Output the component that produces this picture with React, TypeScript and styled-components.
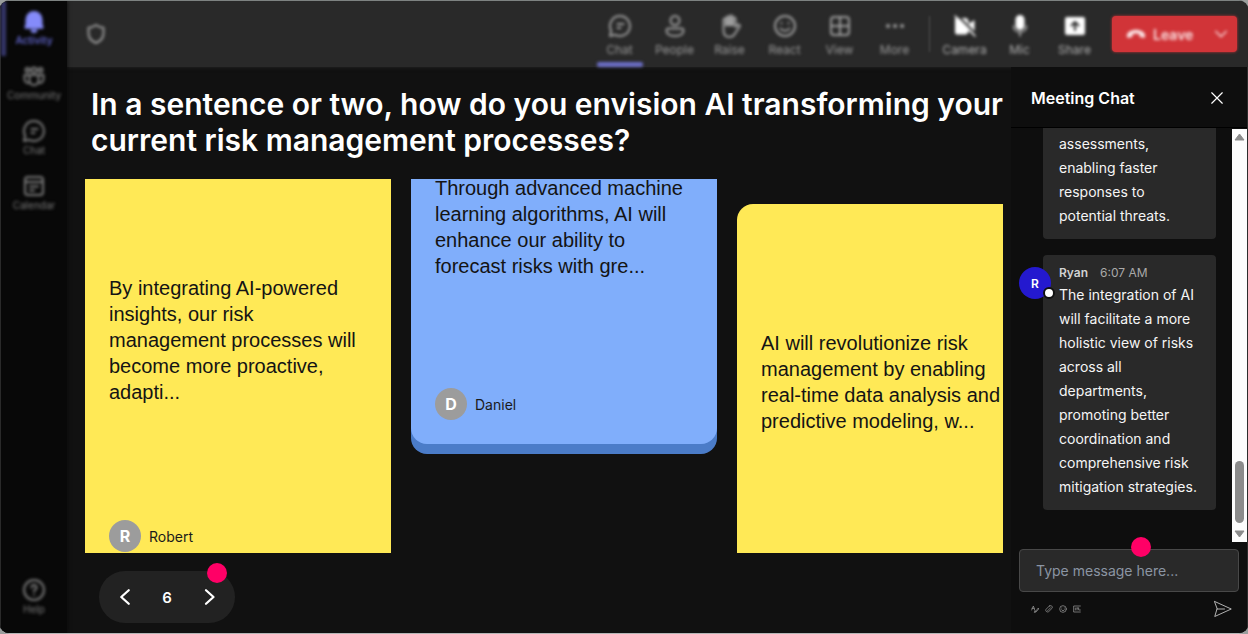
import React from 'react';
import styled, { createGlobalStyle, css } from 'styled-components';

const GlobalStyle = createGlobalStyle`
  *, *::before, *::after { box-sizing: border-box; }
  body { margin: 0; background: #9a9e9d; font-family: Inter, "Liberation Sans", sans-serif; }
  button { font: inherit; color: inherit; background: none; border: 0; padding: 0; cursor: pointer; }
  p, h1, h2 { margin: 0; }
  svg { display: block; }
`;

const softFocus = css`
  filter: blur(1px) blur(1px);
`;

const Shell = styled.div`
  display: flex;
  height: 100vh;
  min-height: 480px;
  border-top: 1px solid #7d8281;
  border-bottom: 1px solid #b4b6b6;
  background: #111;
  border-radius: 9px;
  overflow: hidden;
`;

const Sidebar = styled.nav`
  display: flex;
  flex-direction: column;
  flex: 0 0 67px;
  padding-bottom: 8px;
  background: #080808;
  border-left: 1px solid #2a2a2a;
  box-shadow: 0 0 4px #080808;
  z-index: 1;
`;

const SideSpacer = styled.div`
  flex: 1;
`;

const SideItem = styled.button<{ $active?: boolean }>`
  display: flex;
  flex-direction: column;
  align-items: center;
  height: 55px;
  padding-top: 8px;
  font-size: 10px;
  line-height: 14px;
  color: ${(p) => (p.$active ? '#5f63c8' : '#7c7c7c')};
  ${softFocus}
  ${(p) =>
    p.$active &&
    css`
      box-shadow: inset 5px 0 0 #36376b;
      font-weight: 600;
      svg { color: #858bfa; }
    `}
`;

const Main = styled.div`
  display: flex;
  flex-direction: column;
  flex: 1;
  min-width: 0;
`;

const TopBar = styled.header`
  display: flex;
  align-items: center;
  justify-content: flex-end;
  flex: 0 0 66px;
  padding: 0 11px 0 17px;
  background: #292929;
  box-shadow: 0 0 4px #292929;
`;

const ShieldButton = styled.button`
  margin-right: auto;
  color: #9c9c9c;
  ${softFocus}
`;

const Tool = styled.button<{ $bright?: boolean; $active?: boolean }>`
  display: flex;
  flex-direction: column;
  align-items: center;
  width: 55px;
  height: 66px;
  padding-top: 13px;
  font-size: 12px;
  line-height: 24px;
  color: ${(p) => (p.$bright ? '#b0b0b0' : '#9a9a9a')};
  ${softFocus}
  svg { color: ${(p) => (p.$bright ? '#fff' : '#9e9e9e')}; }
  ${(p) =>
    p.$active &&
    css`
      &::after {
        content: '';
        width: 46px;
        height: 5px;
        border-radius: 2px;
        background: #6c6ec8;
      }
    `}
`;

const ToolDivider = styled.div`
  width: 1px;
  height: 36px;
  margin: 0 7px;
  background: #505050;
  filter: blur(1px);
`;

const LeaveGroup = styled.div`
  display: flex;
  align-items: center;
  height: 36px;
  margin-left: 10px;
  border-radius: 4px;
  background: #d13438;
  color: #fbe4e5;
  box-shadow: 0 0 3px #d13438;
`;

const LeaveButton = styled.button`
  display: flex;
  align-items: center;
  gap: 7px;
  width: 93px;
  padding-left: 14px;
  font-size: 14px;
  font-weight: 600;
  ${softFocus}
`;

const LeaveMore = styled.button`
  display: flex;
  justify-content: center;
  width: 32px;
  ${softFocus}
`;

const Content = styled.div`
  display: flex;
  flex: 1;
  min-height: 0;
`;

const Stage = styled.main`
  display: flex;
  flex-direction: column;
  flex: 1;
  min-width: 0;
  padding: 19px 8px 10px 18px;
`;

const Question = styled.h1`
  padding-left: 6px;
  margin-bottom: 21px;
  color: #fff;
  font-size: 30px;
  font-weight: 600;
  line-height: 36px;
`;

const Board = styled.section`
  display: flex;
  align-items: flex-start;
  gap: 20px;
  flex: 1;
  min-height: 0;
  overflow: hidden;
`;

const tones = {
  yellow: { face: '#ffe956', edge: '#cdb83a' },
  blue: { face: '#80aefb', edge: '#4b7cc8' },
};

const Card = styled.article<{ $tone: keyof typeof tones; $shift: number; $height: number }>`
  display: flex;
  flex-direction: column;
  flex: 0 0 306px;
  gap: 26px;
  height: ${(p) => p.$height}px;
  margin-top: ${(p) => p.$shift}px;
  padding: 24px;
  border-radius: 16px;
  background: ${(p) => tones[p.$tone].face};
  box-shadow: 0 10px 0 ${(p) => tones[p.$tone].edge};
`;

const CardText = styled.p`
  display: flex;
  flex: 1;
  flex-direction: column;
  justify-content: center;
  color: #141414;
  font-family: "Liberation Sans", Arial, sans-serif;
  font-size: 20px;
  line-height: 26px;
  white-space: nowrap;
`;

const Author = styled.div`
  display: flex;
  align-items: center;
  gap: 8px;
  height: 32px;
  color: #1a1a1a;
  font-size: 14px;
`;

const AuthorBadge = styled.span`
  display: grid;
  place-items: center;
  width: 32px;
  height: 32px;
  border-radius: 50%;
  background: #9c9c9c;
  color: #fff;
  font-size: 16px;
  font-weight: 700;
`;

const Pager = styled.div`
  position: relative;
  display: flex;
  align-items: center;
  justify-content: space-between;
  width: 136px;
  height: 52px;
  margin: 18px 0 0 14px;
  padding: 0 17px;
  border-radius: 26px;
  background: #222;
  color: #fff;
  font-size: 15px;
  font-weight: 600;
`;

const Hotspot = styled.span<{ $place: 'pager' | 'composer' }>`
  position: absolute;
  width: 20px;
  height: 20px;
  border-radius: 50%;
  background: #ff0066;
  ${(p) => (p.$place === 'pager' ? 'top: -8px; right: 8px;' : 'top: -12px; left: 51%;')}
`;

const Chat = styled.aside`
  display: flex;
  flex-direction: column;
  flex: 0 0 237px;
  background: #0e0e0e;
  border-right: 1px solid #2c2c2c;
`;

const ChatHeader = styled.header`
  display: flex;
  align-items: center;
  justify-content: space-between;
  height: 61px;
  padding: 2px 23px 0 20px;
  border-bottom: 1px solid #000;
  color: #fff;
`;

const ChatTitle = styled.h2`
  font-size: 16px;
  font-weight: 600;
`;

const ChatBody = styled.div`
  display: flex;
  flex: 1;
  min-height: 0;
`;

const Messages = styled.div`
  display: flex;
  flex: 1;
  flex-direction: column;
  justify-content: flex-end;
  gap: 16px;
  padding: 0 16px 32px 8px;
  overflow: hidden;
`;

const MessageRow = styled.div`
  display: grid;
  grid-template-columns: 24px 1fr;
`;

const Bubble = styled.div`
  grid-column: 2;
  grid-row: 1;
  padding: 8px 16px 11px;
  border-radius: 4px;
  background: #292929;
  color: #f5f5f5;
  font-size: 14px;
  line-height: 24px;
`;

const Line = styled.span`
  display: block;
  white-space: nowrap;
`;

const Meta = styled.div`
  display: flex;
  gap: 12px;
  color: #a9a9a9;
  font-size: 12px;
  line-height: 20px;
`;

const Sender = styled.strong`
  color: #d2d2d2;
  font-weight: 600;
`;

const Avatar = styled.span`
  position: relative;
  grid-column: 1;
  grid-row: 1;
  display: grid;
  place-items: center;
  width: 32px;
  height: 32px;
  margin-top: 12px;
  border-radius: 50%;
  background: #2419cf;
  color: #fff;
  font-size: 12px;
  font-weight: 600;
  z-index: 1;
  &::after {
    content: '';
    position: absolute;
    right: -4px;
    bottom: 0;
    width: 12px;
    height: 12px;
    border: 2px solid #111;
    border-radius: 50%;
    background: #fff;
  }
`;

const ScrollTrack = styled.div`
  display: flex;
  flex-direction: column;
  align-items: center;
  width: 15px;
  margin-top: 1px;
  padding: 4px 0;
  background: #fcfcfc;
  color: #8b8b8b;
`;

const ScrollThumb = styled.div`
  width: 9px;
  height: 62px;
  margin: auto 0 7px;
  border-radius: 5px;
  background: currentColor;
`;

const Composer = styled.form`
  position: relative;
  margin: 7px 8px 0 8px;
`;

const MessageInput = styled.input`
  display: block;
  width: 100%;
  height: 43px;
  padding: 0 16px;
  border: 1px solid #484848;
  border-radius: 4px;
  background: #292929;
  color: #fff;
  font: 14px Inter, sans-serif;
  &::placeholder { color: #8b95a3; opacity: 1; }
`;

const ComposerActions = styled.div`
  display: flex;
  align-items: center;
  gap: 6px;
  height: 41px;
  padding: 0 7px 8px 12px;
  color: #a5a5a5;
`;

const SendButton = styled.button`
  margin-left: auto;
  color: #e8e8e8;
`;

type IconProps = { size?: number; width?: number; children: React.ReactNode };

const Icon = ({ size = 24, width = 2, children }: IconProps) => (
  <svg
    width={size}
    height={size}
    viewBox="0 0 24 24"
    fill="none"
    stroke="currentColor"
    strokeWidth={width}
    strokeLinecap="round"
    strokeLinejoin="round"
    aria-hidden="true"
  >
    {children}
  </svg>
);

const BellIcon = () => (
  <Icon>
    <path fill="currentColor" stroke="none" d="M12 2a8.500 8.500 0 0 0-8.500 8.500V15l-1 3c-.3.900.2 1.700 1.100 1.700h16.800c.9 0 1.400-.8 1.100-1.700L20.500 15v-4.500A8.500 8.500 0 0 0 12 2ZM8.500 20.500a3.500 3.500 0 0 0 7 0Z" />
  </Icon>
);
const CommunityIcon = () => (
  <Icon>
    <circle cx="12" cy="6" r="2.500" />
    <circle cx="5.500" cy="6" r="2" />
    <circle cx="18.500" cy="6" r="2" />
    <path d="M7.500 11h9v5.500a4.500 4.500 0 0 1-9 0ZM7 11H2.500v4A4 4 0 0 0 7 19M17 11h4.500v4a4 4 0 0 1-4.500 4" />
  </Icon>
);
const ChatIcon = () => (
  <Icon>
    <path d="M12 2a10 10 0 1 1-4.800 18.800L2 22l1.200-5.200A10 10 0 0 1 12 2Z" />
    <path d="M9.500 10h6M9.500 14h3" />
  </Icon>
);
const CalendarIcon = () => (
  <Icon>
    <rect x="3" y="3" width="18" height="18" rx="3" />
    <path d="M3 8h18M8 12.500h8M8 16.500h4" />
  </Icon>
);
const HelpIcon = () => (
  <Icon>
    <circle cx="12" cy="12" r="10" />
    <path d="M9.500 9.500a2.500 2.500 0 1 1 3.700 2.200c-.8.500-1.200 1-1.200 2M12 17v.1" />
  </Icon>
);
const ShieldIcon = () => (
  <Icon>
    <path d="M12 3c2.300 1.700 4.700 2.500 7.500 2.700V11c0 4.700-2.500 8-7.500 10-5-2-7.500-5.300-7.500-10V5.700C7.300 5.500 9.700 4.700 12 3Z" />
  </Icon>
);
const PeopleIcon = () => (
  <Icon>
    <circle cx="12" cy="6.500" r="4.500" />
    <path d="M5.500 14.500h13c1.300 0 2 .8 2 2 0 3.500-3.500 5.500-8.500 5.500s-8.500-2-8.500-5.500c0-1.200.7-2 2-2Z" />
  </Icon>
);
const RaiseIcon = () => (
  <Icon>
    <path d="M5.500 12V6a1.500 1.500 0 0 1 3 0V4a1.500 1.500 0 0 1 3 0V3a1.500 1.500 0 0 1 3 0v2a1.500 1.500 0 0 1 3 0v8l2-2c1.500-1 3 .5 2 2l-4.500 6.500C16 21.500 14.500 23 11.500 23c-4 0-6-3-6-7Z" />
    <path d="M8.500 5v6M11.500 4v7M14.500 4v7" strokeWidth="3" />
  </Icon>
);
const ReactIcon = () => (
  <Icon>
    <circle cx="12" cy="12" r="10" />
    <path d="M8.500 9v.5M15.500 9v.5M7.500 14.500c2.300 3 6.700 3 9 0" />
  </Icon>
);
const ViewIcon = () => (
  <Icon>
    <rect x="3" y="3" width="18" height="18" rx="3" />
    <path d="M12 3v18M3 12h18" />
  </Icon>
);
const MoreIcon = () => (
  <Icon width={4}>
    <path d="M5 12h.1M12 12h.1M19 12h.1" />
  </Icon>
);
const CameraOffIcon = () => (
  <Icon>
    <path fill="currentColor" stroke="none" d="M3 4h9c2.200 0 3.500 1.300 3.500 3.500V10l6-4v14l-6-4v1c0 2-1.300 3.500-3.500 3.500H4c-1 0-2-1-2-2V5c0-.6.400-1 1-1Z" />
    <path stroke="#292929" d="m4 1 19 19" />
    <path d="m2 2 20 20" strokeWidth="1.500" />
  </Icon>
);
const MicIcon = () => (
  <Icon>
    <rect x="8.500" y="2" width="7" height="13" rx="3.500" fill="currentColor" />
    <path d="M5.500 12c0 8 13 8 13 0M12 18v4" strokeWidth="1.500" opacity=".7" />
  </Icon>
);
const ShareIcon = () => (
  <Icon>
    <rect x="2" y="3" width="20" height="18" rx="2" fill="currentColor" stroke="none" />
    <path stroke="#292929" d="M12 16V8m-3.500 3.500L12 8l3.500 3.500" />
  </Icon>
);
const HangUpIcon = () => (
  <Icon size={20}>
    <path fill="currentColor" stroke="none" d="M12 7c5.500 0 11 2.700 11 7 0 2-.8 3-2.300 2.600l-3.200-.8c-1-.3-1.500-1-1.500-2v-1.600c-2.600-.9-5.400-.9-8 0v1.600c0 1-.5 1.700-1.500 2l-3.200.8C1.800 17 1 16 1 14c0-4.300 5.500-7 11-7Z" />
  </Icon>
);

type Note = {
  author?: string;
  tone: keyof typeof tones;
  shift: number;
  height: number;
  lines: string[];
};

const notes: Note[] = [
  {
    author: 'Robert',
    tone: 'yellow',
    shift: -17,
    height: 414,
    lines: ['By integrating AI-powered', 'insights, our risk', 'management processes will', 'become more proactive,', 'adapti...'],
  },
  {
    author: 'Daniel',
    tone: 'blue',
    shift: -112,
    height: 377,
    lines: ['Through advanced machine', 'learning algorithms, AI will', 'enhance our ability to', 'forecast risks with gre...'],
  },
  {
    tone: 'yellow',
    shift: 25,
    height: 414,
    lines: ['AI will revolutionize risk', 'management by enabling', 'real-time data analysis and', 'predictive modeling, w...'],
  },
];

const earlierMessage = ['assessments,', 'enabling faster', 'responses to', 'potential threats.'];
const ryanMessage = [
  'The integration of AI',
  'will facilitate a more',
  'holistic view of risks',
  'across all',
  'departments,',
  'promoting better',
  'coordination and',
  'comprehensive risk',
  'mitigation strategies.',
];

const sideItems = [
  { label: 'Activity', icon: <BellIcon />, active: true },
  { label: 'Community', icon: <CommunityIcon /> },
  { label: 'Chat', icon: <ChatIcon /> },
  { label: 'Calendar', icon: <CalendarIcon /> },
];

const meetingTools = [
  { label: 'Chat', icon: <ChatIcon />, active: true },
  { label: 'People', icon: <PeopleIcon /> },
  { label: 'Raise', icon: <RaiseIcon /> },
  { label: 'React', icon: <ReactIcon /> },
  { label: 'View', icon: <ViewIcon /> },
  { label: 'More', icon: <MoreIcon /> },
];

const deviceTools = [
  { label: 'Camera', icon: <CameraOffIcon /> },
  { label: 'Mic', icon: <MicIcon /> },
  { label: 'Share', icon: <ShareIcon /> },
];

const NoteCard = ({ note }: { note: Note }) => (
  <Card $tone={note.tone} $shift={note.shift} $height={note.height}>
    <CardText>
      {note.lines.map((line) => (
        <span key={line}>{line}</span>
      ))}
    </CardText>
    <Author>
      {note.author && (
        <>
          <AuthorBadge>{note.author[0]}</AuthorBadge>
          {note.author}
        </>
      )}
    </Author>
  </Card>
);

export default function App() {
  return (
    <>
      <GlobalStyle />
      <Shell>
        <Sidebar>
          {sideItems.map((item) => (
            <SideItem key={item.label} $active={item.active}>
              {item.icon}
              {item.label}
            </SideItem>
          ))}
          <SideSpacer />
          <SideItem>
            <HelpIcon />
            Help
          </SideItem>
        </Sidebar>
        <Main>
          <TopBar>
            <ShieldButton aria-label="Meeting security">
              <ShieldIcon />
            </ShieldButton>
            {meetingTools.map((tool) => (
              <Tool key={tool.label} $active={tool.active}>
                {tool.icon}
                {tool.label}
              </Tool>
            ))}
            <ToolDivider />
            {deviceTools.map((tool) => (
              <Tool key={tool.label} $bright>
                {tool.icon}
                {tool.label}
              </Tool>
            ))}
            <LeaveGroup>
              <LeaveButton>
                <HangUpIcon />
                Leave
              </LeaveButton>
              <LeaveMore aria-label="Leave options">
                <Icon size={16}>
                  <path d="m4 8 8 8 8-8" />
                </Icon>
              </LeaveMore>
            </LeaveGroup>
          </TopBar>
          <Content>
            <Stage>
              <Question>
                In a sentence or two, how do you envision AI transforming your current risk management processes?
              </Question>
              <Board>
                {notes.map((note) => (
                  <NoteCard key={note.lines[0]} note={note} />
                ))}
              </Board>
              <Pager>
                <button aria-label="Previous">
                  <Icon size={18} width={3}>
                    <path d="M17 3 7 12l10 9" />
                  </Icon>
                </button>
                <span>6</span>
                <button aria-label="Next">
                  <Icon size={18} width={3}>
                    <path d="m8 3 10 9-10 9" />
                  </Icon>
                </button>
                <Hotspot $place="pager" />
              </Pager>
            </Stage>
            <Chat>
              <ChatHeader>
                <ChatTitle>Meeting Chat</ChatTitle>
                <button aria-label="Close chat">
                  <Icon size={14}>
                    <path d="m3 3 18 18M21 3 3 21" />
                  </Icon>
                </button>
              </ChatHeader>
              <ChatBody>
                <Messages>
                  <MessageRow>
                    <Bubble>
                      {earlierMessage.map((line) => (
                        <Line key={line}>{line}</Line>
                      ))}
                    </Bubble>
                  </MessageRow>
                  <MessageRow>
                    <Avatar>R</Avatar>
                    <Bubble>
                      <Meta>
                        <Sender>Ryan</Sender>
                        <time>6:07 AM</time>
                      </Meta>
                      {ryanMessage.map((line) => (
                        <Line key={line}>{line}</Line>
                      ))}
                    </Bubble>
                  </MessageRow>
                </Messages>
                <ScrollTrack aria-hidden="true">
                  <svg width="11" height="8" viewBox="0 0 11 8">
                    <path fill="currentColor" stroke="currentColor" strokeLinejoin="round" d="M5.500 1 10 7H1Z" />
                  </svg>
                  <ScrollThumb />
                  <svg width="11" height="8" viewBox="0 0 11 8">
                    <path fill="currentColor" stroke="currentColor" strokeLinejoin="round" d="M5.500 7 1 1h9Z" />
                  </svg>
                </ScrollTrack>
              </ChatBody>
              <Composer>
                <MessageInput aria-label="Message" placeholder="Type message here..." />
                <Hotspot $place="composer" />
                <ComposerActions>
                  <Icon size={8} width={2}>
                    <path d="m2 15 5-12 4 12M3 10h7M12 21l10-12 1 3-8 9-5 1 2-5" />
                  </Icon>
                  <Icon size={8} width={2}>
                    <path d="m8 17 9-9M13 3 3 13c-3 5 3 10 8 7L21 10c4-5-3-11-8-7Z" />
                  </Icon>
                  <Icon size={8} width={2}>
                    <circle cx="12" cy="12" r="10" />
                    <path d="M8 9v.1M16 9v.1M7 14c2 4 8 4 10 0" />
                  </Icon>
                  <Icon size={8} width={2}>
                    <path d="M22 3H2v18h20M7 9v6M12 9v6M12 9h4M17 9v6h5" />
                  </Icon>
                  <SendButton type="button" aria-label="Send">
                    <Icon size={18} width={1}>
                      <path d="M1 2 23 12 1 22 4 12ZM4 12H14" />
                    </Icon>
                  </SendButton>
                </ComposerActions>
              </Composer>
            </Chat>
          </Content>
        </Main>
      </Shell>
    </>
  );
}
